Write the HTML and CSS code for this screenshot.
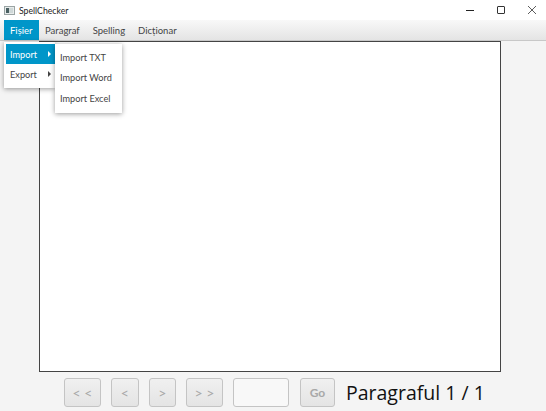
FILE: index.html
```html
<!DOCTYPE html>
<html>
<head>
  <meta charset="utf-8">
  <title>SpellChecker</title>
  <link rel="stylesheet" href="styles.css">
</head>
<body>
  <div class="window">
    <div class="titlebar">
      <svg class="app-icon" width="11" height="9" viewBox="0 0 11 9">
        <rect x="0.5" y="0.5" width="10" height="8" fill="#e8ecec" stroke="#9aa4a4"/>
        <rect x="2" y="2" width="3" height="5" fill="#4a6062"/>
        <rect x="5" y="2" width="4" height="5" fill="#cfd8d8"/>
      </svg>
      <span class="app-title">SpellChecker</span>
      <div class="window-controls">
        <svg width="10" height="10" viewBox="0 0 10 10"><path d="M1 5.5H9" stroke="#222" fill="none"/></svg>
        <svg width="10" height="10" viewBox="0 0 10 10"><rect x="1.5" y="1.5" width="7" height="7" rx="0.5" stroke="#333" fill="none"/></svg>
        <svg width="10" height="10" viewBox="0 0 10 10"><path d="M1 1L9 9M9 1L1 9" stroke="#333" fill="none" stroke-width="0.8"/></svg>
      </div>
    </div>

    <div class="menubar">
      <div class="menubar-item active">Fișier</div>
      <div class="menubar-item">Paragraf</div>
      <div class="menubar-item">Spelling</div>
      <div class="menubar-item">Dicționar</div>
    </div>

    <div class="content">
      <div class="textarea"></div>
      <div class="pager">
        <button type="button" class="btn btn-wide">&lt; &lt;</button>
        <button type="button" class="btn">&lt;</button>
        <button type="button" class="btn">&gt;</button>
        <button type="button" class="btn btn-wide">&gt; &gt;</button>
        <input type="text" class="page-input">
        <button type="button" class="btn btn-go">Go</button>
        <span class="page-label">Paragraful 1 / 1</span>
      </div>
    </div>

    <div class="menu menu-main">
      <div class="menu-item selected">Import <span class="arrow"></span></div>
      <div class="menu-item">Export <span class="arrow"></span></div>
    </div>
    <div class="menu menu-sub">
      <div class="menu-item">Import TXT</div>
      <div class="menu-item">Import Word</div>
      <div class="menu-item">Import Excel</div>
    </div>
  </div>
</body>
</html>
```

FILE: styles.css
```css
body {
  margin: 0;
  font-family: "Lato", "Open Sans", sans-serif;
  font-size: 9.5px;
  color: #333;
}

.window {
  position: relative;
  width: 546px;
  height: 411px;
  overflow: hidden;
  background: #f4f4f4;
}

.titlebar {
  display: flex;
  align-items: center;
  height: 20px;
  background: #fff;
  padding-left: 4px;
}

.app-icon {
  margin-right: 4px;
}

.app-title {
  font-size: 8.7px;
  color: #222;
}

.window-controls {
  display: flex;
  gap: 21px;
  margin-left: auto;
  padding-right: 9px;
}

.menubar {
  display: flex;
  height: 20px;
  padding-left: 4px;
  background: linear-gradient(#f8f8f8, #e4e4e4);
}

.menubar-item {
  display: flex;
  align-items: center;
  padding: 0 6.5px;
  color: #444;
}

.menubar-item.active {
  padding: 0 6px;
  background: #0096c9;
  color: #fff;
}

.content {
  display: flex;
  flex-direction: column;
  padding-left: 39px;
  border-top: 1px solid #c8c8c8;
}

.textarea {
  width: 460px;
  height: 329px;
  background: #fff;
  border: 1px solid #444;
}

.pager {
  display: flex;
  align-items: center;
  margin-top: 6px;
  padding-left: 25px;
  gap: 10px;
}

.btn {
  width: 27.5px;
  height: 29px;
  padding: 0;
  border: 1px solid #c4c4c4;
  border-radius: 3px;
  background: linear-gradient(#f0f0f0, #e4e4e4);
  color: #a8a8a8;
  font-family: inherit;
  font-size: 14px;
}

.btn-wide {
  width: 37px;
}

.btn-go {
  width: 35px;
  margin-left: 1px;
  font-weight: bold;
  font-size: 12px;
}

.page-input {
  width: 56px;
  height: 29px;
  box-sizing: border-box;
  border: 1px solid #c4c4c4;
  border-radius: 3px;
  background: #f8f8f8;
}

.page-label {
  margin-left: 1px;
  font-family: "Open Sans", sans-serif;
  font-size: 19.5px;
  color: #111;
  white-space: nowrap;
}

.menu {
  position: absolute;
  background: #fff;
  box-shadow: 0 1px 5px rgba(0, 0, 0, 0.4);
}

.menu-main {
  left: 4px;
  top: 42px;
  width: 51px;
  padding: 2px 0 4px 2px;
  box-sizing: border-box;
}

.menu-sub {
  left: 55px;
  top: 44px;
  width: 67px;
  padding: 3px 0 4px;
}

.menu-item {
  display: flex;
  align-items: center;
  justify-content: space-between;
  height: 20px;
  padding: 0 4px;
  font-size: 9.2px;
  color: #444;
}

.menu-sub .menu-item {
  height: 20.5px;
  padding: 0 5px;
}

.menu-item.selected {
  background: #0096c9;
  color: #fff;
}

.arrow {
  width: 0;
  height: 0;
  border-left: 3px solid currentColor;
  border-top: 3px solid transparent;
  border-bottom: 3px solid transparent;
}
```
